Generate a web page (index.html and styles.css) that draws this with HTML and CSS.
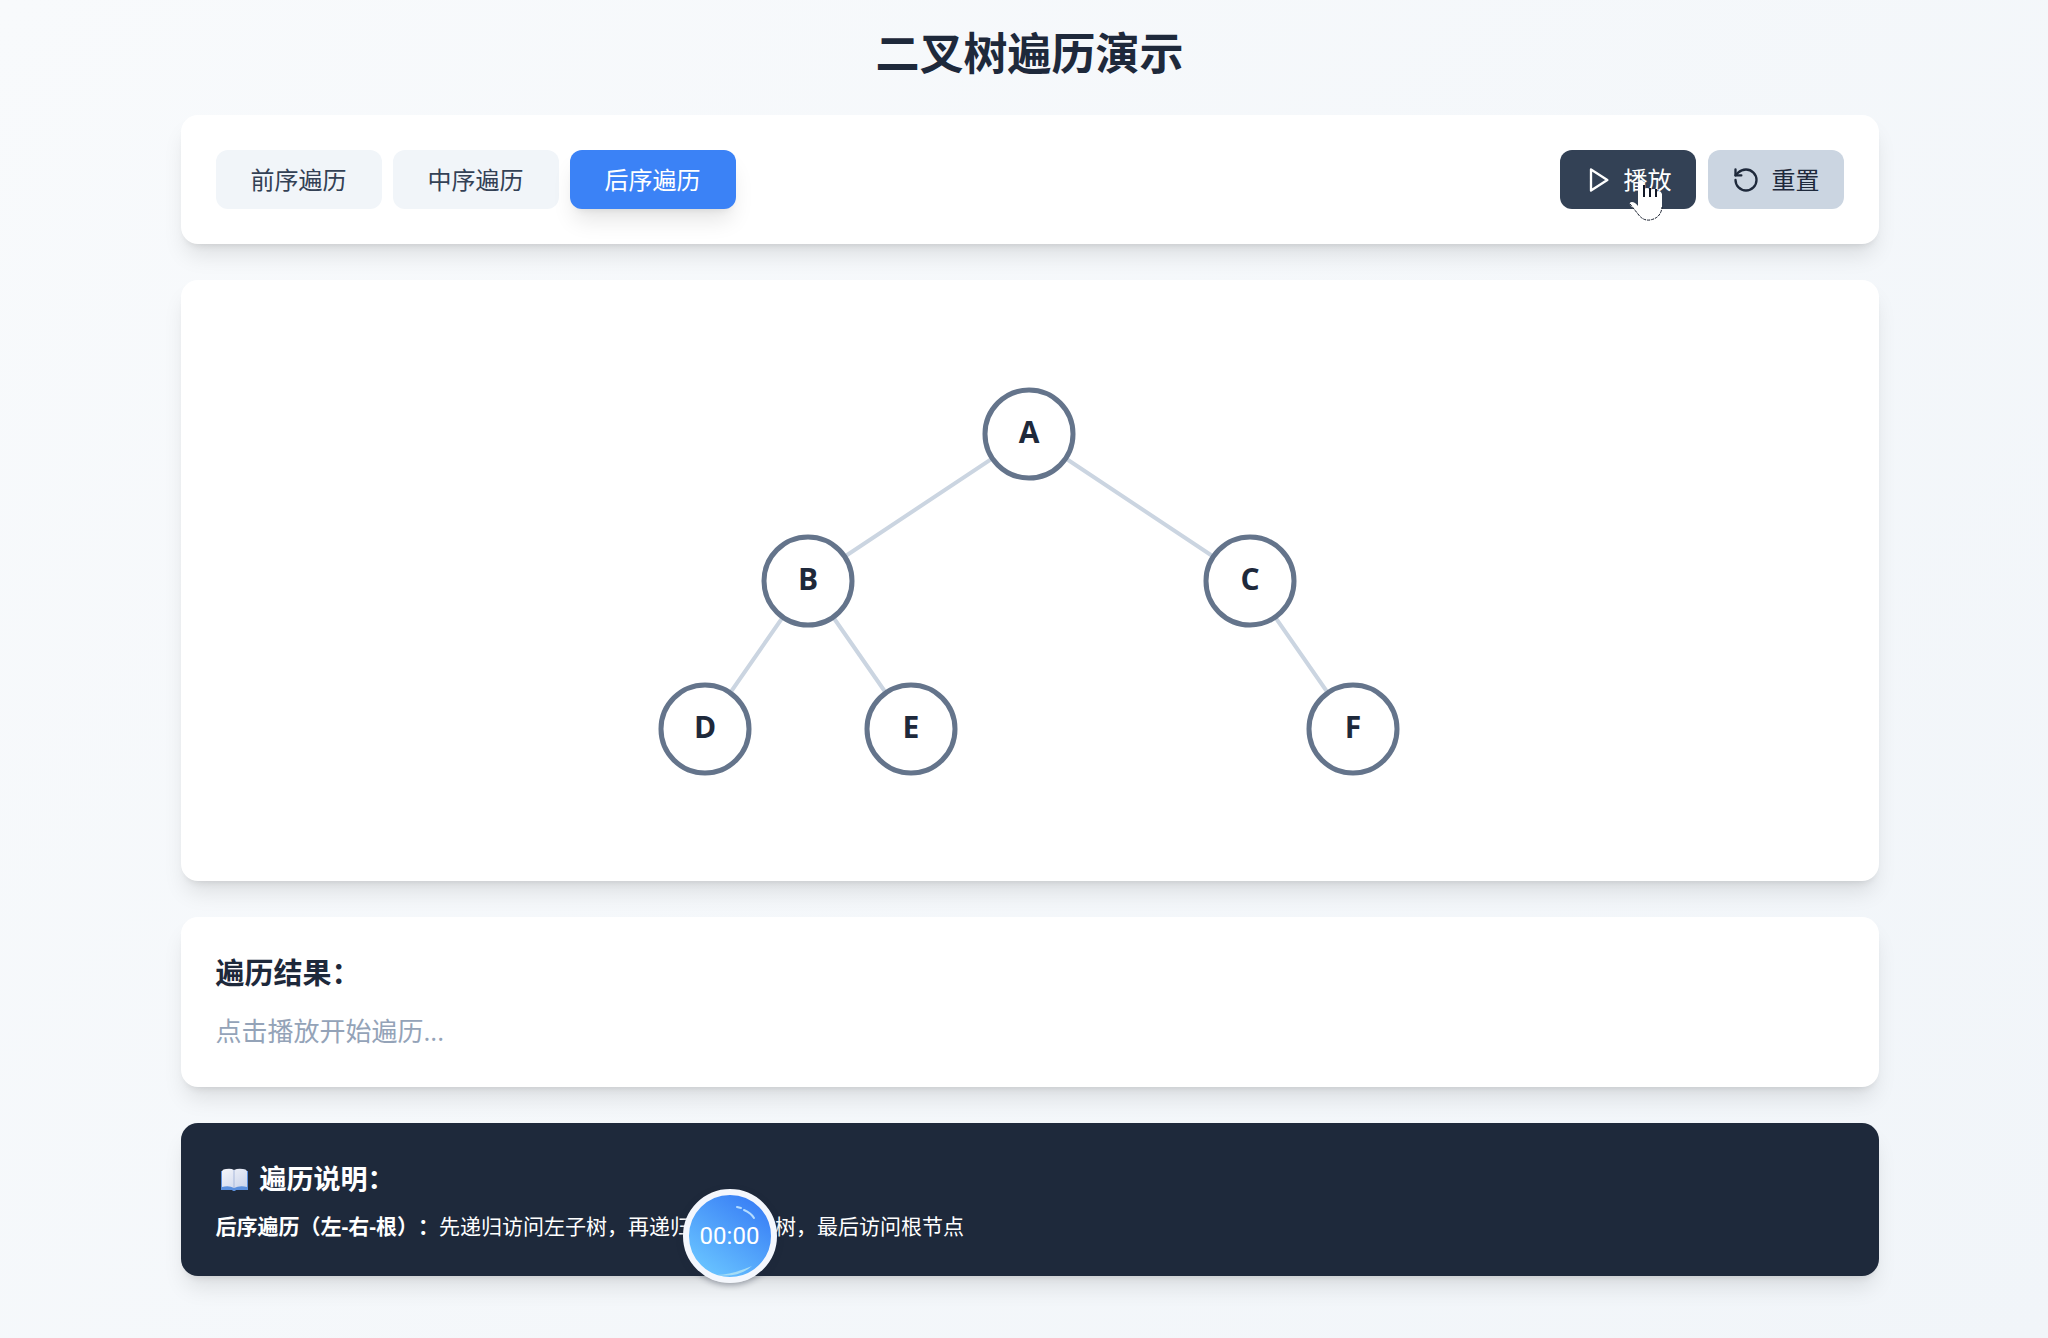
FILE: index.html
```html
<!DOCTYPE html>
<html lang="zh-CN">
<head>
<meta charset="utf-8">
<meta name="viewport" content="width=device-width, initial-scale=1">
<title>二叉树遍历演示</title>
<link rel="stylesheet" href="styles.css">
</head>
<body>
<main class="page">
  <h1 class="title">二叉树遍历演示</h1>

  <section class="card toolbar">
    <div class="modes">
      <button type="button" class="btn mode">前序遍历</button>
      <button type="button" class="btn mode">中序遍历</button>
      <button type="button" class="btn mode active">后序遍历</button>
    </div>
    <div class="actions">
      <button type="button" class="btn action play">
        <svg class="icon" viewBox="0 0 24 24" aria-hidden="true"><path d="M6 3l14 9-14 9z"/></svg>
        播放
        <svg class="cursor" viewBox="0 0 36 46" aria-hidden="true">
          <path class="hand" d="M10 30V7q0-3 3-3t3 3v7q0-2 3-2t3 3q0-2 3-2t3 3q1-1 3-1t3 3v14q0 11-11 13-8 1-13-7L2 29q-1-3 2-3 3 0 6 4z"/>
          <path class="gaps" d="M16 9v12M22 12v9M28 13v8"/>
          <path class="outline" d="M2 28l8 10q5 7 12 6 11-2 12-13"/>
        </svg>
      </button>
      <button type="button" class="btn action reset">
        <svg class="icon" viewBox="0 0 24 24" aria-hidden="true"><path d="M3 12a9 9 0 1 0 9-9 9.75 9.75 0 0 0-6.74 2.74L3 8"/><path d="M3 3v5h5"/></svg>
        重置
      </button>
    </div>
  </section>

  <section class="card canvas">
    <svg class="tree" viewBox="1 0 800 531" role="img" aria-label="二叉树">
      <g class="edges">
        <path d="M400 119L179 266M400 119L621 266M179 266L76 414M179 266L282 414M621 266L724 414"/>
      </g>
      <g class="nodes">
        <circle cx="400" cy="119" r="44"/><text x="400" y="128">A</text>
        <circle cx="179" cy="266" r="44"/><text x="179" y="275">B</text>
        <circle cx="621" cy="266" r="44"/><text x="621" y="275">C</text>
        <circle cx="76" cy="414" r="44"/><text x="76" y="423">D</text>
        <circle cx="282" cy="414" r="44"/><text x="282" y="423">E</text>
        <circle cx="724" cy="414" r="44"/><text x="724" y="423">F</text>
      </g>
    </svg>
  </section>

  <section class="card result">
    <h2 class="result-title">遍历结果：</h2>
    <p class="placeholder">点击播放开始遍历...</p>
  </section>

  <section class="card guide">
    <h2 class="guide-title">
      <svg class="book" viewBox="0 0 36 36" aria-hidden="true">
        <defs><linearGradient id="leaf" x1="0" y1="0" x2="1" y2="1"><stop offset="0" stop-color="#f5f6fb"/><stop offset="1" stop-color="#c9d3ea"/></linearGradient></defs>
        <path fill="#5b8fdc" d="M5 10h27v19H20l-1 1h-2l-1-1H5z"/>
        <path fill="url(#leaf)" d="M6 10q1-2 4-2 5-1 8 1 4-2 9-1 3 0 4 2v16q-7-2-13 1-5-3-12-1z"/>
        <path stroke="#a9b9dc" d="M18 9v18"/>
      </svg>
      遍历说明：
    </h2>
    <p class="guide-text"><strong>后序遍历（左-右-根）：</strong>先递归访问左子树，再递归访问右子树，最后访问根节点</p>
    <div class="timer">
      <svg class="shine" viewBox="0 0 82 82" aria-hidden="true"><path d="M48 12l4 1M55 15q7 3 10 8"/><path class="glow" d="M28 80q17-1 35-9-13 12-35 9z"/></svg>
      <span>00:00</span>
    </div>
  </section>
</main>
</body>
</html>
```
FILE: styles.css
```css
* { box-sizing: border-box; margin: 0; }

body {
  min-height: 100vh;
  padding: 27px 24px 60px 35px;
  background: linear-gradient(135deg, #f8fafc, #f1f5f9);
  color: #1e293b;
  font-family: "Open Sans", "Noto Sans CJK SC", sans-serif;
  text-spacing-trim: space-all;
}

.page {
  display: flex;
  flex-direction: column;
  gap: 36px;
  max-width: 1698px;
  margin: 0 auto;
}

.title {
  font-size: 44px;
  line-height: 52px;
  text-align: center;
}

.card {
  padding: 35px;
  border-radius: 17px;
  background: #fff;
  box-shadow: 0 15px 22px -4px rgba(0, 0, 0, .1), 0 6px 9px -6px rgba(0, 0, 0, .14);
}

.toolbar,
.modes,
.actions {
  display: flex;
  flex-wrap: wrap;
  align-items: center;
  gap: 12px;
}

.toolbar { justify-content: space-between; }
.modes { gap: 11px; }

.btn {
  display: inline-flex;
  align-items: center;
  gap: 12px;
  padding: 12px 35px;
  border: 0;
  border-radius: 12px;
  font-family: inherit;
  font-size: 24px;
  line-height: 35px;
  cursor: pointer;
}

.mode { background: #f1f5f9; color: #334155; }

.mode.active {
  background: #3b82f6;
  color: #fff;
  box-shadow: 0 15px 22px -4px rgba(0, 0, 0, .1), 0 6px 9px -6px rgba(0, 0, 0, .1);
}

.action { padding: 12px 24px; }
.play { position: relative; background: #334155; color: #fff; }
.reset { background: #cbd5e1; color: #1e293b; }

.icon {
  width: 28px;
  height: 28px;
  fill: none;
  stroke: currentColor;
  stroke-width: 2;
  stroke-linecap: round;
  stroke-linejoin: round;
}

.cursor {
  position: absolute;
  left: 68px;
  top: 26px;
  width: 36px;
  height: 46px;
}

.hand { fill: #fff; }
.gaps { fill: none; stroke: #111827; stroke-width: 2; }
.outline { fill: none; stroke: #111827; stroke-width: 1; stroke-dasharray: 3 1; }

.canvas { display: flex; justify-content: center; }
.tree { width: 100%; max-width: 800px; height: auto; }
.edges path { fill: none; stroke: #cbd5e1; stroke-width: 4; }
.nodes circle { fill: #fff; stroke: #64748b; stroke-width: 5; }
.nodes text { fill: #1e293b; font-size: 30px; font-weight: 700; text-anchor: middle; }

.result { display: grid; gap: 18px; }
.result-title { font-size: 29px; line-height: 41px; }
.placeholder { color: #94a3b8; font-size: 26px; line-height: 41px; }

.guide {
  position: relative;
  display: grid;
  gap: 12px;
  background: #1e293b;
  color: #fff;
}

.guide-title {
  display: flex;
  align-items: center;
  gap: 8px;
  font-size: 27px;
  line-height: 41px;
}

.book { width: 36px; height: 36px; }
.guide-text { font-size: 21px; line-height: 30px; }

.timer {
  position: absolute;
  left: 502px;
  bottom: -7px;
  display: grid;
  place-items: center;
  width: 94px;
  height: 94px;
  border: 6px solid #f4f7fd;
  border-radius: 50%;
  background: linear-gradient(215deg, #3b82f6 15%, #66c0ff 85%);
  box-shadow: 0 2px 6px rgba(30, 41, 59, .4);
  font-family: Roboto, sans-serif;
  font-size: 24px;
  line-height: 30px;
}

.shine {
  position: absolute;
  inset: 0;
  fill: none;
  stroke: #b5dcff;
  stroke-width: 2;
  stroke-linecap: round;
}

.glow { fill: #a5dcf5; stroke: none; }
```
